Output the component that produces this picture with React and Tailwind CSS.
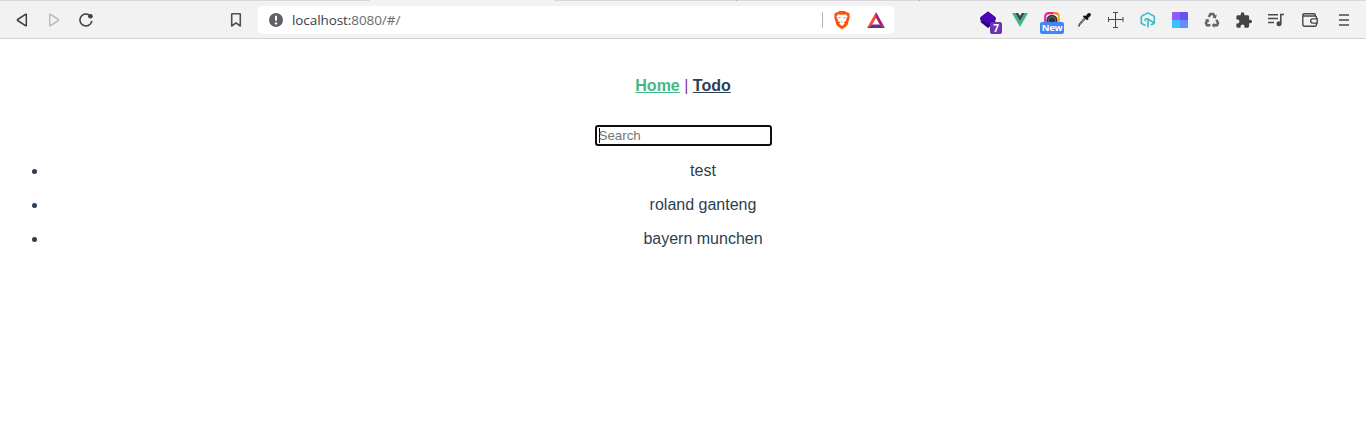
import React from "react";

const Slot = ({ children, className = "w-8" }) => (
  <div className={`relative flex h-8 shrink-0 items-center justify-center ${className}`}>{children}</div>
);

const todos = ["test", "roland ganteng", "bayern munchen"];

function Toolbar() {
  return (
    <header className="flex h-[39px] flex-col border-b border-[#d4d4d4] bg-[#f2f2f2]">
      <div className="flex h-px shrink-0">
        <div className="w-[370px] bg-[#d5d9de]" />
        <div className="w-[184px]" />
        <div className="w-[182px] bg-[#d5d9de]" />
        <div className="w-px bg-[#a9adb2]" />
        <div className="w-[182px] bg-[#d5d9de]" />
        <div className="w-px bg-[#a9adb2]" />
        <div className="flex-1 bg-[#d5d9de]" />
      </div>
      <div className="flex flex-1 items-center pt-px pl-1.5">
        <Slot>
          <svg width="16" height="16" viewBox="0 0 16 16" fill="none" stroke="#404040" strokeWidth="1.5" strokeLinejoin="round">
            <path d="M12.3 2.7V13.3Q12.3 14.2 11.5 13.7L3.6 8.5Q3 8 3.6 7.5L11.5 2.3Q12.3 1.8 12.3 2.7Z" />
          </svg>
        </Slot>
        <Slot>
          <svg width="16" height="16" viewBox="0 0 16 16" fill="none" stroke="#bdbdbd" strokeWidth="1.5" strokeLinejoin="round">
            <path d="M3.7 2.7V13.3Q3.7 14.2 4.5 13.7L12.4 8.5Q13 8 12.4 7.5L4.5 2.3Q3.7 1.8 3.7 2.7Z" />
          </svg>
        </Slot>
        <Slot>
          <svg width="16" height="16" viewBox="0 0 16 16" fill="none">
            <path d="M13.7 9.6A6 6 0 1 1 10.8 2.7" stroke="#404040" strokeWidth="1.6" strokeLinecap="round" />
            <circle cx="12.4" cy="4.2" r="2.3" fill="#404040" />
          </svg>
        </Slot>
        <Slot className="ml-[118px] w-8">
          <svg width="16" height="16" viewBox="0 0 16 16" fill="none" stroke="#505050" strokeWidth="1.6" strokeLinejoin="round">
            <path d="M3.7 2.2Q3.7 1.7 4.2 1.7H11.8Q12.3 1.7 12.3 2.2V14L8 10.8L3.7 14Z" />
          </svg>
        </Slot>
        <div className="ml-1.5 flex h-7 w-[636px] items-center rounded-[4px] bg-white pl-[11px]">
          <svg width="14" height="14" viewBox="0 0 14 14">
            <circle cx="7" cy="7" r="7" fill="#5f6368" />
            <path d="M7 2.8V7.8" stroke="#fff" strokeWidth="2" />
            <circle cx="7" cy="10.4" r="1.2" fill="#fff" />
          </svg>
          <span className="ml-[9px] w-[530px] font-['Open_Sans',sans-serif] text-[13.5px] leading-5 tracking-[-0.08px] text-[#3c4043]">
            localhost:<span className="text-[#696d72]">8080/#/</span>
          </span>
          <div className="h-4 w-px bg-[#b4b4b4]" />
          <Slot className="ml-[3px] w-8">
            <svg width="16" height="18" viewBox="0 0 16 18">
              <path d="M3.6 1.2 5 .1H11L12.4 1.2 14.3 1.4 15.8 3.4 15.4 5 15.8 6.2 13.7 13.5Q13.3 14.7 12.2 15.5L8.8 17.7Q8 18.2 7.2 17.7L3.8 15.5Q2.7 14.7 2.3 13.5L.2 6.2.6 5 .2 3.4 1.7 1.4Z" fill="#fb5410" />
              <path d="M4.2 3.3 6.2 3.7H9.8L11.8 3.3 13.6 5.5 12 8.4 12.2 9.8 9.6 11.5 10.8 12.6 8 15 5.2 12.6 6.4 11.5 3.8 9.8 4 8.4 2.4 5.5Z" fill="#fff" />
              <path d="M3.7 5.9 6.6 6.5 6 7.6ZM12.3 5.9 9.4 6.5 10 7.6ZM6.4 10 8 10.7 9.6 10 8 11.4Z" fill="#fb5410" />
            </svg>
          </Slot>
          <Slot className="ml-[2px] w-8">
            <svg width="18" height="16" viewBox="0 0 18 16">
              <path d="M9 0 0 16 5.2 12.5 9 5.7Z" fill="#ff4724" />
              <path d="M9 0 18 16 12.8 12.5 9 5.7Z" fill="#9e1f63" />
              <path d="M0 16H18L12.8 12.5H5.2Z" fill="#662d91" />
            </svg>
          </Slot>
        </div>

        <Slot className="ml-[78px] w-8">
          <svg width="16" height="18" viewBox="0 0 16 18">
            <path d="M8 5.8 15.8 10.8 8 17 .2 10.8Z" fill="#24007c" />
            <path d="M8 .5 15.8 6.5V9L8 14.2.2 9V6.5Z" fill="#4300a8" />
            <path d="M8 .5 15.8 6.5 8 12 .2 6.5Z" fill="#4b08b5" />
          </svg>
          <span className="absolute top-[18px] left-[18px] flex h-3 w-3 items-center justify-center rounded-[2px] bg-[#6835b5] font-['Open_Sans',sans-serif] text-[10px] leading-3 font-bold text-white">7</span>
        </Slot>
        <Slot>
          <svg width="16" height="14" viewBox="0 0 16 14">
            <path d="M0 0H3.2L8 8.3 12.8 0H16L8 14Z" fill="#41b883" />
            <path d="M3.2 0H6.2L8 3.1 9.8 0H12.8L8 8.3Z" fill="#35495e" />
          </svg>
        </Slot>
        <Slot>
          <svg width="16" height="16" viewBox="0 0 16 16" fill="none">
            <path d="M1.2 12V5Q1.2 1.2 5 1.2" stroke="#e92aad" strokeWidth="2.2" />
            <path d="M4 1.3Q4.4 1.2 5 1.2H9" stroke="#ef2671" strokeWidth="2.2" />
            <path d="M9 1.2H11Q13.5 1.2 14.4 3" stroke="#f57b23" strokeWidth="2.2" />
            <path d="M14.2 2.6Q14.8 3.6 14.8 5V12" stroke="#ffae18" strokeWidth="2.2" />
            <circle cx="8" cy="8.2" r="5.5" fill="#303338" />
            <circle cx="8" cy="8.2" r="3.5" stroke="#69757c" />
          </svg>
          <span className="absolute top-[18px] left-1 flex h-3 w-6 items-center justify-center rounded-[2px] bg-[#4285f4] font-['Open_Sans',sans-serif] text-[9.5px] leading-3 font-bold tracking-[-0.4px] text-white">New</span>
        </Slot>
        <Slot>
          <svg width="16" height="16" viewBox="0 0 16 16">
            <path d="M9.7 6.5 4.3 12.4 2.8 14.5 3.3 11.8 8.5 5.8Z" fill="#b8d2bf" stroke="#353b37" strokeWidth="1" />
            <path d="M7 4 8.6 3.4 9.8 4.1 11.7 1.6Q12.9.4 14.2 1.3T14.5 3.9L12.1 6 12.5 7.3 11.2 8.2 7.2 5.1Z" fill="#151515" />
          </svg>
        </Slot>
        <Slot className="w-8">
          <svg width="16" height="16" viewBox="0 0 16 16" fill="none" stroke="#484848" strokeWidth="1">
            <path d="M7.5 .5V15.5M.5 7.5H15M5 .5H10M5 15.5H10M.5 5V10M15 5V10" />
          </svg>
        </Slot>
        <Slot>
          <svg width="16" height="16" viewBox="0 0 16 16" fill="none" stroke="#32bfc8" strokeWidth="1.6" strokeLinejoin="round">
            <path d="M5.6 13.6 1.3 11.2V4.4L7.8.9 14.3 4.4V11.2L8 7V15.4M14.3 11.2 11 13M8 6.8H5.6L4.8 9" />
          </svg>
        </Slot>
        <Slot>
          <svg width="16" height="16" viewBox="0 0 16 16">
            <path d="M8 0H1Q0 0 0 1V8H8Z" fill="#9259fa" />
            <path d="M8 0H15Q16 0 16 1V8H8Z" fill="#5d55f8" />
            <path d="M0 8H8V16H1Q0 16 0 15Z" fill="#35c2ff" />
            <path d="M8 8H16V15Q16 16 15 16H8Z" fill="#658dff" />
          </svg>
        </Slot>
        <Slot>
          <svg width="16" height="16" viewBox="0 0 16 16" fill="none" stroke="#646464" strokeWidth="2.5">
            <path d="M4.8 5 6.5 2H9.2L10.6 4.4M12.4 7.8 14 11 13 13.3H10M6.4 13.3H3L1.9 11 3.2 8.6" />
            <path d="M12.7 2.6 12 6.6 8.3 5.6ZM10.4 10.6V16L7.8 13.3ZM.6 7.8 4.4 6.8 5.4 10.4Z" fill="#646464" stroke="none" />
          </svg>
        </Slot>
        <Slot>
          <svg width="16" height="16" viewBox="1.5 0.5 22 22" fill="#444">
            <path d="M21 11h-1.5V7a2 2 0 0 0-2-2H13V3.5a2.5 2.5 0 0 0-5 0V5H4a2 2 0 0 0-2 2v3.8h1.5a2.7 2.7 0 0 1 0 5.4H2V20a2 2 0 0 0 2 2h3.8v-1.5a2.7 2.7 0 0 1 5.4 0V22h4.3a2 2 0 0 0 2-2v-4H21a2.5 2.5 0 0 0 0-5Z" />
          </svg>
        </Slot>
        <Slot>
          <svg width="16" height="14" viewBox="0 0 16 14" fill="none" stroke="#4b4b4b" strokeWidth="1.6">
            <path d="M0 1.8H10M0 5.5H10M0 9.5H6M12.8 10.8V1.5H16" />
            <circle cx="11" cy="10.8" r="2.5" fill="#4b4b4b" stroke="none" />
          </svg>
        </Slot>
        <Slot className="ml-[2px] w-8">
          <svg width="16" height="14" viewBox="0 0 16 14" fill="none" stroke="#484848" strokeWidth="1.4">
            <path d="M13.4 3V2.2Q13.4.8 12 .8H2.4Q.8.8.8 2.2V11.3Q.8 13.2 2.8 13.2H12.7Q14.5 13.2 14.5 11.3V10M.8 3H12.5Q14.5 3 14.5 5V6" />
            <path d="M15.2 5.9H10.8A2.1 2.1 0 0 0 10.8 10.1H15.2Z" />
          </svg>
        </Slot>
        <Slot className="ml-[2px] w-8">
          <svg width="10" height="12" viewBox="0 0 10 12" stroke="#484848" strokeWidth="1.6">
            <path d="M0 1H10M0 6H10M0 11H10" />
          </svg>
        </Slot>
      </div>
    </header>
  );
}

export default function App() {
  return (
    <div className="h-[438px] overflow-hidden bg-white font-['Liberation_Sans',Arial,sans-serif] text-base text-[#2c3e50]">
      <Toolbar />
      <main className="text-center">
        <nav className="pt-[38px] leading-[18px]">
          <a className="font-bold text-[#42b983] underline" href="#/">Home</a>
          <span className="text-[#7a3b99]"> | </span>
          <a className="font-bold underline" href="#/todo">Todo</a>
        </nav>
        <div className="mx-auto mt-[30px] flex h-[21px] w-[177px] items-center rounded-[3px] border-2 border-[#101010] bg-white pl-[2px]">
          <div className="h-[15px] w-px bg-black" />
          <input aria-label="Search" placeholder="Search" className="-ml-px h-[17px] w-[168px] bg-transparent p-0 text-[13.333px] leading-[15px] outline-none placeholder:text-[#757575]" />
        </div>
        <ul className="mt-4 flex flex-col gap-4 pl-8 leading-[18px]">
          {todos.map((todo) => (
            <li key={todo} className="flex items-center">
              <span className="mr-[3px] h-[5px] w-[5px] shrink-0 rounded-full bg-[#2c3e50]" />
              <span className="flex-1">{todo}</span>
            </li>
          ))}
        </ul>
      </main>
    </div>
  );
}
